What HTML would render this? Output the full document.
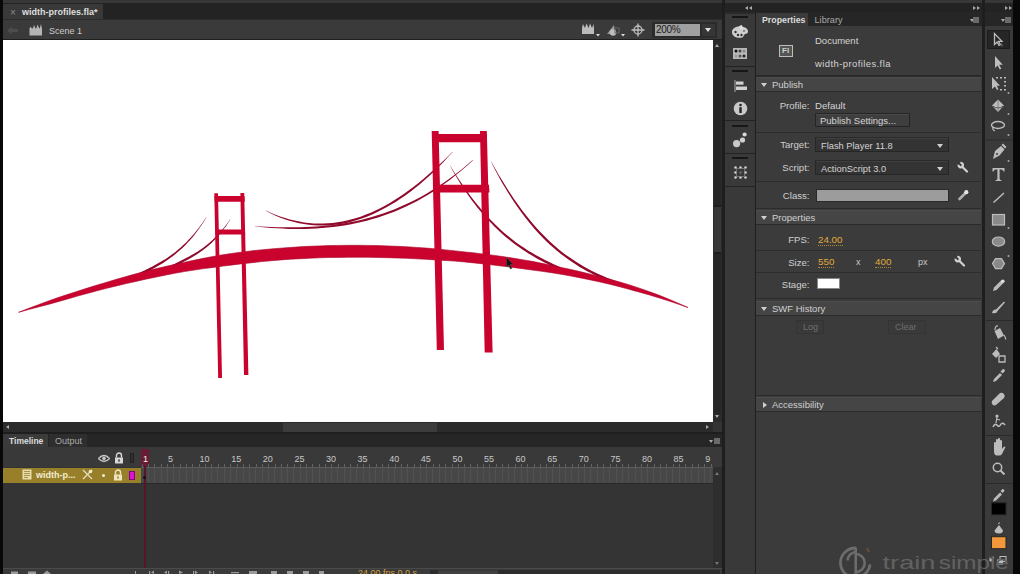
<!DOCTYPE html>
<html><head><meta charset="utf-8">
<style>
*{margin:0;padding:0;box-sizing:border-box}
html,body{width:1020px;height:574px;overflow:hidden;background:#252525;font-family:"Liberation Sans",sans-serif;color:#d6d6d6}
.a{position:absolute}
.t{position:absolute;font-size:9px;white-space:nowrap;line-height:1}
.hd{position:absolute;left:756px;width:225px;height:15px;background:#454545;border-top:1px solid #4d4d4d;border-bottom:1px solid #2a2a2a}
.hd span{position:absolute;left:16px;top:1.2px;font-size:9.5px;color:#d0d0d0}
.tri{position:absolute;left:5px;top:5px;width:0;height:0;border-left:3.5px solid transparent;border-right:3.5px solid transparent;border-top:4px solid #d0d0d0}
.sep{position:absolute;left:756px;width:225px;height:1px;background:#2c2c2c}
.lbl{position:absolute;font-size:9.6px;color:#cfcfcf;text-align:right;width:60px;line-height:1}
.dd{position:absolute;height:15px;background:#333;border:1px solid #262626;border-top-color:#2a2a2a;box-shadow:inset 0 1px 0 #404040}
.dd span{position:absolute;left:5px;top:2.5px;font-size:9.3px;color:#d4d4d4}
.dd i{position:absolute;right:5px;top:5.5px;width:0;height:0;border-left:3px solid transparent;border-right:3px solid transparent;border-top:4px solid #cfcfcf}
.org{color:#e0a93b;border-bottom:1px dotted #b08a30;font-size:9.8px}
.tic{position:absolute;width:1px;height:3px;background:#626262}
.fn{position:absolute;font-size:9px;color:#c8c8c8;top:455px;line-height:1}
</style></head><body>
<!-- left black strip -->
<div class="a" style="left:0;top:0;width:3px;height:574px;background:#080808"></div>

<!-- ===== top doc tab bar ===== -->
<div class="a" style="left:3px;top:0;width:720px;height:3px;background:#373737"></div>
<div class="a" style="left:3px;top:3px;width:720px;height:16px;background:#232323"></div>
<div class="a" style="left:3px;top:4px;width:100px;height:15px;background:#393939"></div>
<div class="t" style="left:10px;top:8px;color:#8a8a8a;font-size:10px">×</div>
<div class="t" style="left:22px;top:8px;font-weight:bold;color:#dedede">width-profiles.fla*</div>
<!-- scene bar -->
<div class="a" style="left:3px;top:19px;width:720px;height:21px;background:#3a3a3a;border-top:1px solid #2c2c2c;border-bottom:1px solid #202020"></div>
<!-- back arrow -->
<svg class="a" style="left:7px;top:26px" width="12" height="9" viewBox="0 0 12 9"><path d="M0 4.5 L5 0.5 V3 H11 V6 H5 V8.5Z" fill="#4c4c4c"/></svg>
<!-- clapper -->
<svg class="a" style="left:29px;top:23px" width="14" height="14" viewBox="0 0 14 14"><path d="M0.5 5.5 H13 V12.5 H0.5Z" fill="#b4b4b4"/><path d="M0.5 6 L1.5 3.5 L3.5 6.5 L5 2 L7 6.5 L8.5 1.5 L10.5 6 L12 1 L13 6Z" fill="#b4b4b4"/></svg>
<div class="t" style="left:49px;top:26.5px;color:#cdcdcd;font-size:9px">Scene 1</div>
<!-- right scene icons -->
<svg class="a" style="left:581px;top:22px" width="46" height="16" viewBox="0 0 46 16">
<path d="M1 6 H13 V12 H1Z" fill="#bcbcbc"/><path d="M1 6 L2 2 L4 6 L5.5 1.5 L7.5 6 L9 1.5 L11 6 L12.5 2 L13 6Z" fill="#bcbcbc"/>
<path d="M15 12 h4 l-2 2.5z" fill="#e0e0e0"/>
<path d="M26 12 L33 3 L34 12Z" fill="#9a9a9a"/><circle cx="32" cy="10.5" r="3.2" fill="#bdbdbd"/><rect x="34" y="6" width="4" height="5" fill="none" stroke="#666" stroke-width="1"/>
<path d="M40 12 h4 l-2 2.5z" fill="#e0e0e0"/>
</svg>
<svg class="a" style="left:631px;top:23px" width="14" height="14" viewBox="0 0 14 14"><circle cx="7" cy="7" r="4" fill="none" stroke="#bdbdbd" stroke-width="1.3"/><path d="M7 0.5V13.5M0.5 7H13.5" stroke="#bdbdbd" stroke-width="1.3"/></svg>
<div class="a" style="left:652px;top:22px;width:65px;height:16px;background:#2b2b2b"></div>
<div class="a" style="left:655px;top:24px;width:45px;height:12px;background:#a0a0a0"></div>
<div class="t" style="left:656px;top:25px;color:#1c1c1c;font-size:10px;letter-spacing:-0.3px">200%</div>
<div class="a" style="left:702px;top:24px;width:13px;height:12px;background:#363636"></div>
<div class="a" style="left:705px;top:28px;width:0;height:0;border-left:3.5px solid transparent;border-right:3.5px solid transparent;border-top:4px solid #e0e0e0"></div>

<!-- ===== stage ===== -->
<div class="a" style="left:3px;top:40px;width:710px;height:382px;background:#fff"></div>
<svg class="a" style="left:0;top:0" width="720" height="430" viewBox="0 0 720 430"><path d="M206.5 216.9 L204.7 219.6 L202.9 222.2 L201.1 224.7 L199.3 227.2 L197.5 229.5 L195.7 231.7 L193.9 233.9 L192.1 235.9 L190.3 237.9 L188.5 239.8 L186.8 241.7 L185.0 243.4 L183.2 245.1 L181.5 246.8 L179.7 248.3 L177.9 249.8 L176.2 251.3 L174.4 252.7 L172.6 254.0 L170.9 255.3 L169.1 256.5 L167.4 257.7 L165.6 258.9 L163.8 260.0 L162.1 261.1 L160.3 262.1 L158.5 263.1 L156.8 264.1 L155.0 265.1 L153.3 266.0 L151.5 266.9 L149.7 267.8 L148.0 268.7 L146.2 269.6 L144.5 270.4 L142.7 271.3 L140.9 272.2 L139.2 273.1 L137.4 273.9 L138.6 276.3 L140.3 275.4 L142.1 274.5 L143.9 273.6 L145.6 272.8 L147.4 271.9 L149.1 270.9 L150.9 270.0 L152.6 269.1 L154.4 268.1 L156.2 267.1 L157.9 266.1 L159.7 265.0 L161.4 264.0 L163.2 262.9 L164.9 261.7 L166.7 260.6 L168.5 259.3 L170.2 258.1 L172.0 256.8 L173.7 255.4 L175.5 254.0 L177.2 252.6 L179.0 251.1 L180.7 249.5 L182.5 247.9 L184.2 246.2 L186.0 244.4 L187.7 242.6 L189.5 240.7 L191.2 238.7 L193.0 236.7 L194.7 234.5 L196.4 232.3 L198.1 230.0 L199.9 227.6 L201.6 225.1 L203.3 222.5 L205.0 219.8 L206.7 217.1Z" fill="#900a2c"/><path d="M230.0 219.5 L228.5 221.7 L227.0 223.8 L225.5 225.8 L223.9 227.7 L222.4 229.5 L220.9 231.3 L219.4 233.0 L217.9 234.6 L216.4 236.1 L215.0 237.6 L213.5 239.1 L212.0 240.5 L210.5 241.8 L209.1 243.1 L207.6 244.3 L206.1 245.5 L204.7 246.6 L203.2 247.7 L201.8 248.8 L200.3 249.8 L198.8 250.7 L197.4 251.7 L195.9 252.6 L194.4 253.5 L193.0 254.3 L191.5 255.1 L190.0 255.9 L188.6 256.7 L187.1 257.5 L185.6 258.3 L184.2 259.0 L182.7 259.8 L181.2 260.5 L179.8 261.2 L178.3 262.0 L176.8 262.7 L175.4 263.5 L173.9 264.2 L172.4 265.0 L173.6 267.1 L175.0 266.3 L176.5 265.6 L177.9 264.9 L179.4 264.1 L180.9 263.4 L182.3 262.6 L183.8 261.8 L185.2 261.1 L186.7 260.3 L188.2 259.5 L189.6 258.7 L191.1 257.8 L192.6 257.0 L194.0 256.1 L195.5 255.2 L197.0 254.3 L198.4 253.3 L199.9 252.3 L201.3 251.3 L202.8 250.2 L204.3 249.1 L205.7 248.0 L207.2 246.8 L208.7 245.6 L210.1 244.3 L211.6 242.9 L213.0 241.6 L214.5 240.1 L216.0 238.6 L217.4 237.0 L218.8 235.4 L220.3 233.7 L221.7 231.9 L223.1 230.1 L224.5 228.1 L226.0 226.2 L227.4 224.1 L228.8 221.9 L230.2 219.7Z" fill="#900a2c"/><path d="M265.6 210.8 L270.4 213.2 L275.1 215.4 L279.9 217.4 L284.7 219.2 L289.5 220.8 L294.3 222.1 L299.1 223.2 L303.9 224.1 L308.7 224.8 L313.6 225.3 L318.4 225.5 L323.2 225.6 L328.1 225.4 L332.9 225.0 L337.7 224.5 L342.6 223.7 L347.4 222.7 L352.2 221.5 L357.1 220.1 L361.9 218.5 L366.7 216.7 L371.6 214.7 L376.4 212.5 L381.2 210.1 L386.0 207.5 L390.8 204.8 L395.6 201.9 L400.4 198.7 L405.3 195.4 L410.1 191.9 L414.8 188.2 L419.6 184.4 L424.4 180.3 L429.2 176.1 L434.0 171.6 L438.6 167.0 L443.3 162.2 L448.0 157.1 L452.7 152.0 L452.5 151.8 L447.6 156.7 L442.7 161.5 L437.8 166.1 L432.9 170.5 L428.1 174.8 L423.3 179.0 L418.5 183.0 L413.7 186.7 L408.9 190.3 L404.1 193.8 L399.3 197.0 L394.5 200.1 L389.8 203.0 L385.0 205.7 L380.2 208.2 L375.5 210.5 L370.7 212.7 L365.9 214.6 L361.2 216.4 L356.4 218.0 L351.7 219.3 L346.9 220.5 L342.2 221.5 L337.4 222.3 L332.7 222.9 L327.9 223.3 L323.2 223.5 L318.4 223.5 L313.7 223.4 L308.9 223.0 L304.2 222.4 L299.4 221.6 L294.6 220.6 L289.9 219.4 L285.1 218.1 L280.2 216.5 L275.4 214.7 L270.6 212.7 L265.8 210.5Z" fill="#900a2c"/><path d="M254.9 226.5 L260.5 227.0 L266.0 227.5 L271.6 227.9 L277.2 228.3 L282.8 228.6 L288.4 228.9 L294.0 229.0 L299.6 229.0 L305.2 228.9 L310.8 228.7 L316.4 228.5 L322.0 228.1 L327.6 227.6 L333.2 227.0 L338.8 226.3 L344.4 225.4 L350.0 224.4 L355.7 223.3 L361.3 222.1 L366.9 220.7 L372.5 219.1 L378.1 217.4 L383.7 215.6 L389.3 213.6 L394.9 211.4 L400.5 209.0 L406.1 206.5 L411.7 203.8 L417.3 200.9 L422.9 197.8 L428.5 194.5 L434.1 191.0 L439.6 187.3 L445.2 183.3 L450.7 179.2 L456.2 174.8 L461.8 170.2 L467.3 165.4 L472.8 160.4 L472.6 160.1 L466.9 165.0 L461.3 169.7 L455.7 174.1 L450.0 178.3 L444.4 182.2 L438.8 186.0 L433.1 189.5 L427.6 192.9 L422.0 196.2 L416.4 199.2 L410.8 202.0 L405.3 204.6 L399.7 207.1 L394.1 209.4 L388.5 211.5 L383.0 213.5 L377.4 215.3 L371.9 217.0 L366.3 218.5 L360.8 219.9 L355.2 221.2 L349.6 222.3 L344.1 223.3 L338.5 224.1 L333.0 224.9 L327.4 225.5 L321.8 226.1 L316.3 226.5 L310.7 226.8 L305.1 227.1 L299.6 227.2 L294.0 227.3 L288.4 227.3 L282.8 227.3 L277.3 227.2 L271.7 227.0 L266.1 226.8 L260.5 226.5 L254.9 226.2Z" fill="#900a2c"/><path d="M449.9 165.6 L452.6 170.4 L455.4 175.2 L458.1 179.7 L460.8 184.2 L463.6 188.5 L466.3 192.6 L469.1 196.6 L471.9 200.4 L474.7 204.1 L477.5 207.7 L480.3 211.1 L483.2 214.4 L486.0 217.6 L488.8 220.7 L491.6 223.6 L494.4 226.5 L497.3 229.2 L500.1 231.9 L502.9 234.4 L505.7 236.9 L508.6 239.2 L511.4 241.5 L514.2 243.7 L517.0 245.8 L519.9 247.8 L522.7 249.7 L525.5 251.6 L528.4 253.4 L531.2 255.1 L534.0 256.8 L536.9 258.4 L539.7 260.0 L542.5 261.5 L545.3 262.9 L548.2 264.3 L551.0 265.7 L553.8 267.0 L556.7 268.3 L559.5 269.6 L560.5 267.3 L557.7 266.0 L554.9 264.8 L552.1 263.4 L549.3 262.1 L546.5 260.7 L543.6 259.3 L540.8 257.8 L538.0 256.3 L535.2 254.7 L532.4 253.1 L529.6 251.4 L526.8 249.7 L524.0 247.8 L521.2 245.9 L518.3 244.0 L515.5 241.9 L512.7 239.8 L509.9 237.6 L507.1 235.3 L504.3 232.9 L501.5 230.4 L498.6 227.8 L495.8 225.1 L493.0 222.3 L490.2 219.4 L487.4 216.4 L484.5 213.2 L481.7 210.0 L478.9 206.6 L476.0 203.1 L473.2 199.5 L470.3 195.7 L467.5 191.8 L464.6 187.8 L461.7 183.6 L458.8 179.3 L455.9 174.8 L453.0 170.2 L450.1 165.4Z" fill="#900a2c"/><path d="M490.9 161.3 L494.4 168.5 L498.0 175.3 L501.6 181.9 L505.3 188.1 L508.9 194.1 L512.6 199.8 L516.3 205.3 L520.0 210.5 L523.7 215.5 L527.4 220.3 L531.1 224.8 L534.8 229.2 L538.5 233.3 L542.3 237.2 L546.0 240.9 L549.7 244.4 L553.5 247.8 L557.2 250.9 L560.9 254.0 L564.7 256.8 L568.4 259.6 L572.1 262.1 L575.9 264.6 L579.6 266.9 L583.3 269.1 L587.1 271.2 L590.8 273.1 L594.5 275.0 L598.3 276.8 L602.0 278.5 L605.7 280.1 L609.5 281.7 L613.2 283.1 L617.0 284.6 L620.7 286.0 L624.4 287.3 L628.1 288.6 L631.9 289.9 L635.6 291.2 L636.4 288.7 L632.7 287.5 L629.0 286.2 L625.3 284.9 L621.6 283.5 L617.9 282.1 L614.2 280.7 L610.5 279.3 L606.8 277.7 L603.1 276.1 L599.4 274.4 L595.7 272.7 L592.0 270.9 L588.3 268.9 L584.6 266.9 L580.9 264.8 L577.2 262.5 L573.5 260.1 L569.8 257.6 L566.0 255.0 L562.3 252.2 L558.6 249.2 L554.9 246.1 L551.2 242.8 L547.5 239.3 L543.8 235.6 L540.1 231.8 L536.4 227.7 L532.7 223.5 L529.0 219.0 L525.2 214.3 L521.5 209.4 L517.8 204.3 L514.0 198.9 L510.2 193.3 L506.5 187.4 L502.7 181.2 L498.8 174.9 L495.0 168.2 L491.1 161.2Z" fill="#900a2c"/><path d="M18.6 312.3 L28.5 309.6 L38.3 307.0 L48.2 304.4 L58.0 301.7 L67.7 298.9 L77.5 296.1 L87.2 293.4 L97.0 290.8 L106.7 288.3 L116.4 285.9 L126.2 283.6 L135.9 281.4 L145.6 279.2 L155.3 277.2 L165.0 275.2 L174.7 273.3 L184.4 271.6 L194.1 270.1 L203.8 268.6 L213.5 267.4 L223.1 266.1 L232.8 264.9 L242.4 263.7 L252.1 262.7 L261.7 261.6 L271.4 260.7 L281.0 259.9 L290.6 259.2 L300.3 258.7 L309.9 258.2 L319.6 257.8 L329.2 257.5 L338.8 257.4 L348.5 257.3 L358.1 257.3 L367.8 257.3 L377.4 257.5 L387.1 257.7 L396.7 258.0 L406.4 258.3 L416.0 258.8 L425.7 259.3 L435.4 259.9 L445.0 260.5 L454.7 261.1 L464.4 261.9 L474.0 262.9 L483.7 263.9 L493.4 265.1 L503.0 266.2 L512.7 267.4 L522.4 268.7 L532.1 270.0 L541.8 271.3 L551.5 272.7 L561.2 274.3 L570.9 276.0 L580.6 277.9 L590.4 279.9 L600.1 282.0 L609.8 284.3 L619.5 286.7 L629.2 289.3 L638.9 292.0 L648.7 294.7 L658.5 297.7 L668.3 300.8 L678.1 304.1 L688.0 307.5 L688.0 307.5 L678.4 303.3 L668.9 299.2 L659.3 295.3 L649.7 291.8 L640.0 288.4 L630.4 285.2 L620.7 282.3 L611.0 279.5 L601.3 276.9 L591.6 274.4 L581.9 272.1 L572.2 269.8 L562.5 267.7 L552.8 265.6 L543.1 263.6 L533.5 261.6 L523.7 259.9 L514.0 258.3 L504.3 256.8 L494.6 255.4 L484.8 254.2 L475.1 253.0 L465.4 252.0 L455.6 250.9 L445.9 249.9 L436.2 248.9 L426.4 248.1 L416.7 247.4 L406.9 246.8 L397.2 246.3 L387.4 245.9 L377.7 245.6 L367.9 245.4 L358.2 245.3 L348.4 245.3 L338.7 245.4 L328.9 245.6 L319.1 245.9 L309.4 246.3 L299.6 246.8 L289.8 247.5 L280.1 248.2 L270.3 249.0 L260.5 249.9 L250.8 250.9 L241.0 252.2 L231.3 253.5 L221.5 255.0 L211.8 256.7 L202.1 258.6 L192.4 260.6 L182.7 262.7 L173.0 264.8 L163.2 267.0 L153.5 269.3 L143.8 271.8 L134.1 274.3 L124.5 277.0 L114.8 279.8 L105.1 282.7 L95.5 285.6 L85.8 288.6 L76.1 291.7 L66.5 294.8 L56.8 298.0 L47.2 301.4 L37.7 305.0 L28.1 308.6 L18.6 312.3Z" fill="#c9032d" stroke="#a8032a" stroke-width="0.6"/><path d="M214.3 193.3 L218.0 193.3 L222.0 378.0 L218.2 378.0Z" fill="#c9032d"/><path d="M240.4 193.1 L244.2 193.1 L248.4 375.0 L244.0 375.0Z" fill="#c9032d"/><path d="M214.5 196.0 L244.5 196.0 L244.8 201.7 L214.8 201.7Z" fill="#c9032d"/><path d="M215.5 229.4 L245.0 229.4 L245.2 234.6 L215.5 234.6Z" fill="#c9032d"/><path d="M431.7 131.0 L438.6 131.0 L444.0 350.0 L436.8 350.0Z" fill="#c9032d"/><path d="M480.0 131.0 L486.8 131.0 L492.6 352.4 L484.7 352.4Z" fill="#c9032d"/><path d="M432.0 134.0 L487.0 134.0 L487.0 142.3 L432.0 142.3Z" fill="#c9032d"/><path d="M433.5 184.7 L489.0 184.7 L489.5 192.5 L433.5 192.5Z" fill="#c9032d"/></svg>
<!-- cursor -->
<svg class="a" style="left:506px;top:257px" width="8" height="13" viewBox="0 0 8 13"><path d="M0.5 0.5 L0.5 10 L2.5 8 L4.5 12 L6 11.3 L4 7.5 L7 7.5Z" fill="#111" stroke="#555" stroke-width="0.5"/></svg>

<!-- v scrollbar -->
<div class="a" style="left:713px;top:40px;width:9px;height:382px;background:#2b2b2b"></div>
<div class="a" style="left:714px;top:48px;width:7px;height:366px;background:#262626"></div>
<div class="a" style="left:714px;top:205px;width:7px;height:49px;background:#383838;border-top:2px solid #1e1e1e;border-bottom:2px solid #1e1e1e"></div>
<div class="a" style="left:715px;top:44px;width:0;height:0;border-left:2.5px solid transparent;border-right:2.5px solid transparent;border-bottom:3px solid #aaa"></div>
<div class="a" style="left:715px;top:415px;width:0;height:0;border-left:2.5px solid transparent;border-right:2.5px solid transparent;border-top:3px solid #aaa"></div>
<!-- h scrollbar -->
<div class="a" style="left:3px;top:422px;width:719px;height:10px;background:#2b2b2b"></div>

<div class="a" style="left:283px;top:423px;width:154px;height:9px;background:#3c3c3c"></div>
<div class="a" style="left:6px;top:425px;width:0;height:0;border-top:2.5px solid transparent;border-bottom:2.5px solid transparent;border-right:3px solid #aaa"></div>
<div class="a" style="left:706px;top:425px;width:0;height:0;border-top:2.5px solid transparent;border-bottom:2.5px solid transparent;border-left:3px solid #aaa"></div>
<div class="a" style="left:713px;top:422px;width:9px;height:10px;background:#333"></div>

<!-- ===== timeline panel ===== -->
<div class="a" style="left:3px;top:432px;width:720px;height:2px;background:#1e1e1e"></div>
<div class="a" style="left:3px;top:434px;width:720px;height:13px;background:#262626"></div>
<div class="a" style="left:3px;top:434px;width:45px;height:13px;background:#3b3b3b"></div>
<div class="a" style="left:49px;top:434px;width:38px;height:13px;background:#2e2e2e"></div>
<div class="t" style="left:9px;top:437px;font-weight:bold;color:#dcdcdc;font-size:8.5px">Timeline</div>
<div class="t" style="left:55px;top:437px;color:#aaaaaa">Output</div>
<div class="a" style="left:709px;top:440px;width:0;height:0;border-left:2px solid transparent;border-right:2px solid transparent;border-top:3px solid #aaa"></div>
<div class="a" style="left:714px;top:438px;width:6px;height:6px;background:#6a6a6a"></div>
<!-- header row -->
<div class="a" style="left:3px;top:447px;width:720px;height:127px;background:#343434"></div>
<div class="a" style="left:3px;top:447px;width:720px;height:20px;background:#393939"></div>
<!-- eye -->
<svg class="a" style="left:98px;top:454px" width="12" height="9" viewBox="0 0 12 9"><path d="M0.5 4.5 Q6 -1.5 11.5 4.5 Q6 10.5 0.5 4.5Z" fill="none" stroke="#c8c8c8" stroke-width="1.3"/><circle cx="6" cy="4.5" r="1.8" fill="#c8c8c8"/></svg>
<!-- lock -->
<svg class="a" style="left:114px;top:452px" width="10" height="12" viewBox="0 0 10 12"><path d="M2.5 5.5 V3.5 A2.5 2.5 0 0 1 7.5 3.5 V5.5" fill="none" stroke="#d8d8d8" stroke-width="1.4"/><rect x="1" y="5.5" width="8" height="6" fill="#d8d8d8"/><rect x="4.3" y="7.3" width="1.4" height="2.4" fill="#393939"/></svg>
<div class="a" style="left:130px;top:453px;width:4px;height:10px;border:1px solid #222;background:#2f2f2f"></div>
<!-- frames header -->
<div class="a" style="left:141px;top:449px;width:8px;height:17px;background:#6b1a33;border-radius:1px"></div>
<div class="t" style="left:143px;top:455px;color:#f0f0f0;font-size:9px">1</div>
<div class="fn" style="left:168.0px">5</div><div class="fn" style="left:199.6px">10</div><div class="fn" style="left:231.2px">15</div><div class="fn" style="left:262.8px">20</div><div class="fn" style="left:294.4px">25</div><div class="fn" style="left:326.0px">30</div><div class="fn" style="left:357.6px">35</div><div class="fn" style="left:389.2px">40</div><div class="fn" style="left:420.8px">45</div><div class="fn" style="left:452.4px">50</div><div class="fn" style="left:484.0px">55</div><div class="fn" style="left:515.6px">60</div><div class="fn" style="left:547.2px">65</div><div class="fn" style="left:578.8px">70</div><div class="fn" style="left:610.4px">75</div><div class="fn" style="left:642.0px">80</div><div class="fn" style="left:673.6px">85</div><div class="fn" style="left:705.2px">9</div><div class="tic" style="left:141.8px;top:464px"></div><div class="tic" style="left:148.1px;top:464px"></div><div class="tic" style="left:154.4px;top:464px"></div><div class="tic" style="left:160.8px;top:464px"></div><div class="tic" style="left:167.1px;top:464px"></div><div class="tic" style="left:173.4px;top:464px"></div><div class="tic" style="left:179.7px;top:464px"></div><div class="tic" style="left:186.0px;top:464px"></div><div class="tic" style="left:192.4px;top:464px"></div><div class="tic" style="left:198.7px;top:464px"></div><div class="tic" style="left:205.0px;top:464px"></div><div class="tic" style="left:211.3px;top:464px"></div><div class="tic" style="left:217.6px;top:464px"></div><div class="tic" style="left:224.0px;top:464px"></div><div class="tic" style="left:230.3px;top:464px"></div><div class="tic" style="left:236.6px;top:464px"></div><div class="tic" style="left:242.9px;top:464px"></div><div class="tic" style="left:249.2px;top:464px"></div><div class="tic" style="left:255.6px;top:464px"></div><div class="tic" style="left:261.9px;top:464px"></div><div class="tic" style="left:268.2px;top:464px"></div><div class="tic" style="left:274.5px;top:464px"></div><div class="tic" style="left:280.8px;top:464px"></div><div class="tic" style="left:287.2px;top:464px"></div><div class="tic" style="left:293.5px;top:464px"></div><div class="tic" style="left:299.8px;top:464px"></div><div class="tic" style="left:306.1px;top:464px"></div><div class="tic" style="left:312.4px;top:464px"></div><div class="tic" style="left:318.8px;top:464px"></div><div class="tic" style="left:325.1px;top:464px"></div><div class="tic" style="left:331.4px;top:464px"></div><div class="tic" style="left:337.7px;top:464px"></div><div class="tic" style="left:344.0px;top:464px"></div><div class="tic" style="left:350.4px;top:464px"></div><div class="tic" style="left:356.7px;top:464px"></div><div class="tic" style="left:363.0px;top:464px"></div><div class="tic" style="left:369.3px;top:464px"></div><div class="tic" style="left:375.6px;top:464px"></div><div class="tic" style="left:382.0px;top:464px"></div><div class="tic" style="left:388.3px;top:464px"></div><div class="tic" style="left:394.6px;top:464px"></div><div class="tic" style="left:400.9px;top:464px"></div><div class="tic" style="left:407.2px;top:464px"></div><div class="tic" style="left:413.6px;top:464px"></div><div class="tic" style="left:419.9px;top:464px"></div><div class="tic" style="left:426.2px;top:464px"></div><div class="tic" style="left:432.5px;top:464px"></div><div class="tic" style="left:438.8px;top:464px"></div><div class="tic" style="left:445.2px;top:464px"></div><div class="tic" style="left:451.5px;top:464px"></div><div class="tic" style="left:457.8px;top:464px"></div><div class="tic" style="left:464.1px;top:464px"></div><div class="tic" style="left:470.4px;top:464px"></div><div class="tic" style="left:476.8px;top:464px"></div><div class="tic" style="left:483.1px;top:464px"></div><div class="tic" style="left:489.4px;top:464px"></div><div class="tic" style="left:495.7px;top:464px"></div><div class="tic" style="left:502.0px;top:464px"></div><div class="tic" style="left:508.4px;top:464px"></div><div class="tic" style="left:514.7px;top:464px"></div><div class="tic" style="left:521.0px;top:464px"></div><div class="tic" style="left:527.3px;top:464px"></div><div class="tic" style="left:533.6px;top:464px"></div><div class="tic" style="left:540.0px;top:464px"></div><div class="tic" style="left:546.3px;top:464px"></div><div class="tic" style="left:552.6px;top:464px"></div><div class="tic" style="left:558.9px;top:464px"></div><div class="tic" style="left:565.2px;top:464px"></div><div class="tic" style="left:571.6px;top:464px"></div><div class="tic" style="left:577.9px;top:464px"></div><div class="tic" style="left:584.2px;top:464px"></div><div class="tic" style="left:590.5px;top:464px"></div><div class="tic" style="left:596.8px;top:464px"></div><div class="tic" style="left:603.2px;top:464px"></div><div class="tic" style="left:609.5px;top:464px"></div><div class="tic" style="left:615.8px;top:464px"></div><div class="tic" style="left:622.1px;top:464px"></div><div class="tic" style="left:628.4px;top:464px"></div><div class="tic" style="left:634.8px;top:464px"></div><div class="tic" style="left:641.1px;top:464px"></div><div class="tic" style="left:647.4px;top:464px"></div><div class="tic" style="left:653.7px;top:464px"></div><div class="tic" style="left:660.0px;top:464px"></div><div class="tic" style="left:666.4px;top:464px"></div><div class="tic" style="left:672.7px;top:464px"></div><div class="tic" style="left:679.0px;top:464px"></div><div class="tic" style="left:685.3px;top:464px"></div><div class="tic" style="left:691.6px;top:464px"></div><div class="tic" style="left:698.0px;top:464px"></div><div class="tic" style="left:704.3px;top:464px"></div><div class="tic" style="left:710.6px;top:464px"></div>
<!-- layer row -->
<div class="a" style="left:3px;top:468px;width:138px;height:15px;background:#98802a"></div>
<svg class="a" style="left:22px;top:469px" width="10" height="11" viewBox="0 0 10 11"><rect x="0.5" y="0.5" width="9" height="10" fill="#e8dcae"/><path d="M2 2.5h6M2 4.5h6M2 6.5h6M2 8.5h4" stroke="#98802a" stroke-width="0.8"/></svg>
<div class="t" style="left:36px;top:471px;font-weight:bold;color:#f2ecd0">width-p...</div>
<svg class="a" style="left:82px;top:469px" width="11" height="11" viewBox="0 0 11 11"><path d="M1 1 L10 10 M10 1 L1 10" stroke="#e8e0c0" stroke-width="1.2"/><circle cx="8.5" cy="2.5" r="1.8" fill="#f0e8c8"/></svg>
<div class="a" style="left:102px;top:474px;width:3px;height:3px;background:#f5efd0;border-radius:50%"></div>
<svg class="a" style="left:113px;top:469px" width="10" height="12" viewBox="0 0 10 12"><path d="M2.5 5.5 V3.5 A2.5 2.5 0 0 1 7.5 3.5 V5.5" fill="none" stroke="#efe6c0" stroke-width="1.4"/><rect x="1" y="5.5" width="8" height="6" fill="#efe6c0"/><rect x="4.3" y="7.3" width="1.4" height="2.4" fill="#98802a"/></svg>
<div class="a" style="left:129px;top:471px;width:6px;height:9px;background:#e010d8;border:1px solid #7a0a70"></div>
<!-- frames row -->
<div class="a" style="left:141px;top:467px;width:572px;height:16px;background:#474747"></div>
<div class="a" style="left:141px;top:467px;width:572px;height:1px;background:#5c5c5c"></div><div class="a" style="left:147.8px;top:468px;width:1px;height:15px;background:#515151"></div><div class="a" style="left:154.1px;top:468px;width:1px;height:15px;background:#515151"></div><div class="a" style="left:160.5px;top:468px;width:1px;height:15px;background:#515151"></div><div class="a" style="left:166.8px;top:468px;width:1px;height:15px;background:#515151"></div><div class="a" style="left:173.1px;top:468px;width:1px;height:15px;background:#515151"></div><div class="a" style="left:179.4px;top:468px;width:1px;height:15px;background:#515151"></div><div class="a" style="left:185.7px;top:468px;width:1px;height:15px;background:#515151"></div><div class="a" style="left:192.1px;top:468px;width:1px;height:15px;background:#515151"></div><div class="a" style="left:198.4px;top:468px;width:1px;height:15px;background:#515151"></div><div class="a" style="left:204.7px;top:468px;width:1px;height:15px;background:#515151"></div><div class="a" style="left:211.0px;top:468px;width:1px;height:15px;background:#515151"></div><div class="a" style="left:217.3px;top:468px;width:1px;height:15px;background:#515151"></div><div class="a" style="left:223.7px;top:468px;width:1px;height:15px;background:#515151"></div><div class="a" style="left:230.0px;top:468px;width:1px;height:15px;background:#515151"></div><div class="a" style="left:236.3px;top:468px;width:1px;height:15px;background:#515151"></div><div class="a" style="left:242.6px;top:468px;width:1px;height:15px;background:#515151"></div><div class="a" style="left:248.9px;top:468px;width:1px;height:15px;background:#515151"></div><div class="a" style="left:255.3px;top:468px;width:1px;height:15px;background:#515151"></div><div class="a" style="left:261.6px;top:468px;width:1px;height:15px;background:#515151"></div><div class="a" style="left:267.9px;top:468px;width:1px;height:15px;background:#515151"></div><div class="a" style="left:274.2px;top:468px;width:1px;height:15px;background:#515151"></div><div class="a" style="left:280.5px;top:468px;width:1px;height:15px;background:#515151"></div><div class="a" style="left:286.9px;top:468px;width:1px;height:15px;background:#515151"></div><div class="a" style="left:293.2px;top:468px;width:1px;height:15px;background:#515151"></div><div class="a" style="left:299.5px;top:468px;width:1px;height:15px;background:#515151"></div><div class="a" style="left:305.8px;top:468px;width:1px;height:15px;background:#515151"></div><div class="a" style="left:312.1px;top:468px;width:1px;height:15px;background:#515151"></div><div class="a" style="left:318.5px;top:468px;width:1px;height:15px;background:#515151"></div><div class="a" style="left:324.8px;top:468px;width:1px;height:15px;background:#515151"></div><div class="a" style="left:331.1px;top:468px;width:1px;height:15px;background:#515151"></div><div class="a" style="left:337.4px;top:468px;width:1px;height:15px;background:#515151"></div><div class="a" style="left:343.7px;top:468px;width:1px;height:15px;background:#515151"></div><div class="a" style="left:350.1px;top:468px;width:1px;height:15px;background:#515151"></div><div class="a" style="left:356.4px;top:468px;width:1px;height:15px;background:#515151"></div><div class="a" style="left:362.7px;top:468px;width:1px;height:15px;background:#515151"></div><div class="a" style="left:369.0px;top:468px;width:1px;height:15px;background:#515151"></div><div class="a" style="left:375.3px;top:468px;width:1px;height:15px;background:#515151"></div><div class="a" style="left:381.7px;top:468px;width:1px;height:15px;background:#515151"></div><div class="a" style="left:388.0px;top:468px;width:1px;height:15px;background:#515151"></div><div class="a" style="left:394.3px;top:468px;width:1px;height:15px;background:#515151"></div><div class="a" style="left:400.6px;top:468px;width:1px;height:15px;background:#515151"></div><div class="a" style="left:406.9px;top:468px;width:1px;height:15px;background:#515151"></div><div class="a" style="left:413.3px;top:468px;width:1px;height:15px;background:#515151"></div><div class="a" style="left:419.6px;top:468px;width:1px;height:15px;background:#515151"></div><div class="a" style="left:425.9px;top:468px;width:1px;height:15px;background:#515151"></div><div class="a" style="left:432.2px;top:468px;width:1px;height:15px;background:#515151"></div><div class="a" style="left:438.5px;top:468px;width:1px;height:15px;background:#515151"></div><div class="a" style="left:444.9px;top:468px;width:1px;height:15px;background:#515151"></div><div class="a" style="left:451.2px;top:468px;width:1px;height:15px;background:#515151"></div><div class="a" style="left:457.5px;top:468px;width:1px;height:15px;background:#515151"></div><div class="a" style="left:463.8px;top:468px;width:1px;height:15px;background:#515151"></div><div class="a" style="left:470.1px;top:468px;width:1px;height:15px;background:#515151"></div><div class="a" style="left:476.5px;top:468px;width:1px;height:15px;background:#515151"></div><div class="a" style="left:482.8px;top:468px;width:1px;height:15px;background:#515151"></div><div class="a" style="left:489.1px;top:468px;width:1px;height:15px;background:#515151"></div><div class="a" style="left:495.4px;top:468px;width:1px;height:15px;background:#515151"></div><div class="a" style="left:501.7px;top:468px;width:1px;height:15px;background:#515151"></div><div class="a" style="left:508.1px;top:468px;width:1px;height:15px;background:#515151"></div><div class="a" style="left:514.4px;top:468px;width:1px;height:15px;background:#515151"></div><div class="a" style="left:520.7px;top:468px;width:1px;height:15px;background:#515151"></div><div class="a" style="left:527.0px;top:468px;width:1px;height:15px;background:#515151"></div><div class="a" style="left:533.3px;top:468px;width:1px;height:15px;background:#515151"></div><div class="a" style="left:539.7px;top:468px;width:1px;height:15px;background:#515151"></div><div class="a" style="left:546.0px;top:468px;width:1px;height:15px;background:#515151"></div><div class="a" style="left:552.3px;top:468px;width:1px;height:15px;background:#515151"></div><div class="a" style="left:558.6px;top:468px;width:1px;height:15px;background:#515151"></div><div class="a" style="left:564.9px;top:468px;width:1px;height:15px;background:#515151"></div><div class="a" style="left:571.3px;top:468px;width:1px;height:15px;background:#515151"></div><div class="a" style="left:577.6px;top:468px;width:1px;height:15px;background:#515151"></div><div class="a" style="left:583.9px;top:468px;width:1px;height:15px;background:#515151"></div><div class="a" style="left:590.2px;top:468px;width:1px;height:15px;background:#515151"></div><div class="a" style="left:596.5px;top:468px;width:1px;height:15px;background:#515151"></div><div class="a" style="left:602.9px;top:468px;width:1px;height:15px;background:#515151"></div><div class="a" style="left:609.2px;top:468px;width:1px;height:15px;background:#515151"></div><div class="a" style="left:615.5px;top:468px;width:1px;height:15px;background:#515151"></div><div class="a" style="left:621.8px;top:468px;width:1px;height:15px;background:#515151"></div><div class="a" style="left:628.1px;top:468px;width:1px;height:15px;background:#515151"></div><div class="a" style="left:634.5px;top:468px;width:1px;height:15px;background:#515151"></div><div class="a" style="left:640.8px;top:468px;width:1px;height:15px;background:#515151"></div><div class="a" style="left:647.1px;top:468px;width:1px;height:15px;background:#515151"></div><div class="a" style="left:653.4px;top:468px;width:1px;height:15px;background:#515151"></div><div class="a" style="left:659.7px;top:468px;width:1px;height:15px;background:#515151"></div><div class="a" style="left:666.1px;top:468px;width:1px;height:15px;background:#515151"></div><div class="a" style="left:672.4px;top:468px;width:1px;height:15px;background:#515151"></div><div class="a" style="left:678.7px;top:468px;width:1px;height:15px;background:#515151"></div><div class="a" style="left:685.0px;top:468px;width:1px;height:15px;background:#515151"></div><div class="a" style="left:691.3px;top:468px;width:1px;height:15px;background:#515151"></div><div class="a" style="left:697.7px;top:468px;width:1px;height:15px;background:#515151"></div><div class="a" style="left:704.0px;top:468px;width:1px;height:15px;background:#515151"></div><div class="a" style="left:710.3px;top:468px;width:1px;height:15px;background:#515151"></div><div class="a" style="left:141px;top:483px;width:572px;height:1px;background:#2a2a2a"></div>
<!-- playhead line -->
<div class="a" style="left:144px;top:466px;width:2px;height:102px;background:#561626"></div>
<div class="a" style="left:143px;top:476px;width:3px;height:3px;background:#111;border-radius:50%"></div>
<!-- timeline v scroll -->
<div class="a" style="left:713px;top:467px;width:9px;height:101px;background:#2e2e2e"></div>
<div class="a" style="left:715px;top:472px;width:0;height:0;border-left:2.5px solid transparent;border-right:2.5px solid transparent;border-bottom:3px solid #777"></div>
<div class="a" style="left:715px;top:562px;width:0;height:0;border-left:2.5px solid transparent;border-right:2.5px solid transparent;border-top:3px solid #777"></div>
<!-- bottom toolbar -->
<div class="a" style="left:3px;top:568px;width:720px;height:6px;background:#3a3a3a;border-top:1px solid #4a4a4a"></div>

<svg class="a" style="left:3px;top:569px" width="720" height="5" viewBox="0 0 720 5">
<g fill="#9a9a9a">
<rect x="8" y="2.5" width="7" height="3"/><rect x="25" y="2.5" width="8" height="3"/><path d="M40 5 L44 1.5 L48 5Z"/>
<rect x="132" y="2" width="1" height="3"/>
<rect x="146" y="2" width="1.2" height="3"/><path d="M148 3.5 L151 1.5 V5Z"/>
<path d="M161 3.5 L164 1.5 V5Z"/><rect x="165" y="2" width="1.2" height="3"/>
<path d="M176 1.5 L180 3.5 L176 5Z"/>
<rect x="190" y="2" width="1.2" height="3"/><path d="M192 1.5 L195 3.5 L192 5Z"/>
<path d="M206 1.5 L209 3.5 L206 5Z"/><rect x="210" y="2" width="1.2" height="3"/>
<rect x="228" y="3" width="8" height="1.2"/><rect x="246" y="2" width="8" height="3"/>
<rect x="268" y="2" width="6" height="3"/><rect x="284" y="2" width="6" height="3"/><rect x="300" y="2" width="6" height="3"/><rect x="316" y="2" width="5" height="3"/>
</g>
<text x="355" y="7" font-size="9" fill="#d0a040" font-family="Liberation Sans">24.00 fps  0.0 s</text>
<rect x="427" y="1" width="290" height="4" fill="#2c2c2c"/><rect x="435" y="1.5" width="60" height="3.5" fill="#404040"/>
</svg>


<!-- ===== icon column ===== -->
<div class="a" style="left:722px;top:0;width:3px;height:574px;background:#1e1e1e"></div>
<div class="a" style="left:725px;top:0;width:30px;height:3px;background:#373737"></div>
<div class="a" style="left:725px;top:3px;width:30px;height:11px;background:#232323"></div>
<div class="a" style="left:745px;top:6px;width:0;height:0;border-top:2.5px solid transparent;border-bottom:2.5px solid transparent;border-right:3px solid #aaa"></div>
<div class="a" style="left:749px;top:6px;width:0;height:0;border-top:2.5px solid transparent;border-bottom:2.5px solid transparent;border-right:3px solid #aaa"></div>
<div class="a" style="left:725px;top:14px;width:30px;height:560px;background:#393939"></div>

<div class="a" style="left:725px;top:12px;width:30px;height:2px;background:#2a2a2a"></div>
<div class="a" style="left:732px;top:16px;width:16px;height:2px;background:#161616"></div>
<svg class="a" style="left:731px;top:25px" width="18" height="14" viewBox="0 0 18 14"><path d="M9 1.5 C14.5 1.5 17 4 17 6.5 C17 9 15 8.2 13.5 9.5 C12 11 13 12.8 9 12.8 C4 12.8 1 10.5 1 7 C1 3.5 4.5 1.5 9 1.5Z" fill="#cfcfcf"/><circle cx="4.5" cy="7" r="1.2" fill="#333"/><circle cx="7" cy="10" r="1.2" fill="#333"/><circle cx="10.5" cy="10" r="1.2" fill="#333"/><circle cx="13" cy="6" r="1.1" fill="#777"/><path d="M8 1 L11 0 L12 4 L9 4Z" fill="#e0e0e0"/></svg>
<svg class="a" style="left:733px;top:48px" width="14" height="11" viewBox="0 0 14 11"><rect x="0" y="0" width="14" height="11" fill="#b8b8b8"/><circle cx="3" cy="3" r="1.5" fill="#111"/><circle cx="7" cy="3" r="1.5" fill="#444"/><circle cx="11" cy="3" r="1.5" fill="#888"/><circle cx="3" cy="8" r="1.5" fill="#999"/><circle cx="7" cy="8" r="1.5" fill="#555"/><circle cx="11" cy="8" r="1.5" fill="#222"/></svg>
<div class="a" style="left:725px;top:66px;width:30px;height:1px;background:#222"></div>
<div class="a" style="left:732px;top:70px;width:16px;height:2px;background:#161616"></div>
<svg class="a" style="left:734px;top:80px" width="14" height="12" viewBox="0 0 14 12"><rect x="0.5" y="0" width="1" height="12" fill="#aaa"/><rect x="2" y="1.5" width="7.5" height="3.2" fill="#d0d0d0"/><rect x="2" y="6.5" width="11" height="3.5" fill="#d0d0d0"/></svg>
<svg class="a" style="left:733px;top:101px" width="15" height="15" viewBox="0 0 15 15"><circle cx="7.5" cy="7.5" r="6.8" fill="#c9c9c9"/><circle cx="7.5" cy="4" r="1.3" fill="#222"/><rect x="6.3" y="6.2" width="2.4" height="5.8" fill="#222"/></svg>
<div class="a" style="left:725px;top:120px;width:30px;height:1px;background:#222"></div>
<div class="a" style="left:732px;top:125px;width:16px;height:2px;background:#161616"></div>
<svg class="a" style="left:731px;top:131px" width="18" height="18" viewBox="0 0 18 18"><circle cx="5.6" cy="12.6" r="3.6" fill="#c8c8c8"/><circle cx="11.5" cy="9" r="2.6" fill="#cfcfcf"/><circle cx="13.6" cy="3.5" r="2.1" fill="#d8d8d8"/></svg>
<div class="a" style="left:725px;top:153px;width:30px;height:1px;background:#222"></div>
<div class="a" style="left:732px;top:157px;width:16px;height:2px;background:#161616"></div>
<svg class="a" style="left:734px;top:166px" width="13" height="13" viewBox="0 0 13 13"><g fill="#cfcfcf"><circle cx="1.5" cy="1.5" r="1.3"/><circle cx="6.5" cy="1.5" r="1.3"/><circle cx="11.5" cy="1.5" r="1.3"/><circle cx="1.5" cy="6.5" r="1.3"/><circle cx="11.5" cy="6.5" r="1.3"/><circle cx="1.5" cy="11.5" r="1.3"/><circle cx="6.5" cy="11.5" r="1.3"/><circle cx="11.5" cy="11.5" r="1.3"/></g><rect x="2.5" y="2.5" width="8" height="8" fill="none" stroke="#888" stroke-width="0.7"/><rect x="5.5" y="5.5" width="2" height="2" fill="#777"/></svg>
<div class="a" style="left:725px;top:186px;width:30px;height:1px;background:#222"></div>


<!-- ===== properties panel ===== -->
<div class="a" style="left:755px;top:0;width:3px;height:574px;background:#1e1e1e"></div>
<div class="a" style="left:755px;top:0;width:229px;height:3px;background:#373737"></div>
<div class="a" style="left:755px;top:3px;width:229px;height:9px;background:#232323"></div>
<div class="a" style="left:756px;top:12px;width:226px;height:14px;background:#262626"></div>
<div class="a" style="left:756px;top:13px;width:52px;height:13px;background:#3b3b3b"></div>
<div class="t" style="left:762px;top:15.5px;font-weight:bold;color:#dcdcdc;font-size:8.8px">Properties</div>
<div class="t" style="left:814.5px;top:15.5px;color:#a8a8a8;font-size:9.2px">Library</div>
<div class="a" style="left:756px;top:26px;width:226px;height:548px;background:#3b3b3b"></div>

<!-- document section -->
<div class="a" style="left:779px;top:45px;width:14px;height:12px;border:1px solid #bdbdbd;background:#555"></div>
<div class="t" style="left:782px;top:47px;font-size:8px;font-weight:bold;color:#cfcfcf">Fl</div>
<div class="t" style="left:815px;top:36px;color:#d4d4d4;font-size:9.5px">Document</div>
<div class="t" style="left:815px;top:59px;color:#d4d4d4;font-size:9.5px;letter-spacing:0.4px">width-profiles.fla</div>
<div class="sep" style="top:75px;height:2px;background:#2a2a2a"></div>
<div class="hd" style="top:77px"><div class="tri"></div><span>Publish</span></div>
<div class="lbl" style="left:749.5px;top:101px">Profile:</div>
<div class="t" style="left:815px;top:101px;color:#d4d4d4;font-size:9.6px">Default</div>
<div class="a" style="left:815px;top:113px;width:95px;height:14px;background:#3e3e3e;border:1px solid #252525;box-shadow:inset 0 1px 0 #4a4a4a"></div>
<div class="t" style="left:820px;top:116px;color:#d4d4d4;font-size:9.5px">Publish Settings...</div>
<div class="sep" style="top:132px"></div>
<div class="lbl" style="left:749.5px;top:140px">Target:</div>
<div class="dd" style="left:815px;top:137px;width:134px"><span>Flash Player 11.8</span><i></i></div>
<div class="lbl" style="left:749.5px;top:163px">Script:</div>
<div class="dd" style="left:815px;top:160px;width:134px"><span>ActionScript 3.0</span><i></i></div>
<svg class="a" style="left:957px;top:161px" width="12" height="12" viewBox="0 0 12 12"><path d="M3.4 2 A2.2 2.2 0 1 1 1.6 3.8" fill="none" stroke="#d0d0d0" stroke-width="2.2"/><path d="M5 5.5 L10 10.5" stroke="#d0d0d0" stroke-width="2.2" stroke-linecap="round"/></svg>
<div class="sep" style="top:181px"></div>
<div class="lbl" style="left:749.5px;top:191px">Class:</div>
<div class="a" style="left:816px;top:189px;width:133px;height:13px;background:#9c9c9c;border:1px solid #2a2a2a"></div>
<svg class="a" style="left:957px;top:189px" width="12" height="12" viewBox="0 0 12 12"><path d="M2.5 10 L8.5 4" stroke="#b0b0b0" stroke-width="2.6" stroke-linecap="round"/><circle cx="9.3" cy="3.2" r="2.1" fill="#e6e6e6"/></svg>
<div class="sep" style="top:208px"></div>
<div class="hd" style="top:210px"><div class="tri"></div><span>Properties</span></div>
<div class="lbl" style="left:749.5px;top:235px">FPS:</div>
<div class="t org" style="left:818px;top:235px">24.00</div>
<div class="sep" style="top:250px"></div>
<div class="lbl" style="left:749.5px;top:258px">Size:</div>
<div class="t org" style="left:818px;top:257px">550</div>
<div class="t" style="left:856px;top:258px;color:#c8c8c8">x</div>
<div class="t org" style="left:875px;top:257px">400</div>
<div class="t" style="left:918px;top:258px;color:#c8c8c8">px</div>
<svg class="a" style="left:954px;top:255px" width="12" height="12" viewBox="0 0 12 12"><path d="M3.4 2 A2.2 2.2 0 1 1 1.6 3.8" fill="none" stroke="#d0d0d0" stroke-width="2.2"/><path d="M5 5.5 L10 10.5" stroke="#d0d0d0" stroke-width="2.2" stroke-linecap="round"/></svg>
<div class="sep" style="top:272px"></div>
<div class="lbl" style="left:749.5px;top:280px">Stage:</div>
<div class="a" style="left:817px;top:278px;width:23px;height:11px;background:#fff;border:1px solid #888"></div>
<div class="sep" style="top:298px"></div>
<div class="hd" style="top:301px"><div class="tri"></div><span>SWF History</span></div>
<div class="a" style="left:796px;top:320px;width:28px;height:14px;background:#3a3a3a;border:1px solid #343434"></div>
<div class="t" style="left:803px;top:323px;color:#6f6f6f">Log</div>
<div class="a" style="left:888px;top:320px;width:38px;height:14px;background:#3a3a3a;border:1px solid #343434"></div>
<div class="t" style="left:895px;top:323px;color:#6f6f6f">Clear</div>
<div class="sep" style="top:395px"></div>
<div class="hd" style="top:397px"><div class="a" style="left:7px;top:4px;width:0;height:0;border-top:3.5px solid transparent;border-bottom:3.5px solid transparent;border-left:4px solid #d0d0d0"></div><span>Accessibility</span></div>


<!-- ===== tools column ===== -->
<div class="a" style="left:983px;top:0;width:30px;height:3px;background:#373737"></div><div class="a" style="left:983px;top:3px;width:30px;height:9px;background:#232323"></div><div class="a" style="left:982px;top:0;width:3px;height:574px;background:#1e1e1e"></div>
<div class="a" style="left:985px;top:26px;width:28px;height:548px;background:#3a3a3a"></div>

<div class="a" style="left:985px;top:12px;width:28px;height:14px;background:#262626"></div>
<div class="a" style="left:1001px;top:19px;width:0;height:0;border-left:2px solid transparent;border-right:2px solid transparent;border-top:3px solid #aaa"></div>
<div class="a" style="left:1005px;top:17px;width:6px;height:6px;background:#6a6a6a"></div>
<div class="a" style="left:970px;top:19px;width:0;height:0;border-left:2px solid transparent;border-right:2px solid transparent;border-top:3px solid #aaa"></div>
<div class="a" style="left:973px;top:17px;width:6px;height:6px;background:#6a6a6a"></div>
<div class="a" style="left:973px;top:6px;width:0;height:0;border-top:2.5px solid transparent;border-bottom:2.5px solid transparent;border-left:3px solid #aaa"></div>
<div class="a" style="left:977px;top:6px;width:0;height:0;border-top:2.5px solid transparent;border-bottom:2.5px solid transparent;border-left:3px solid #aaa"></div>
<div class="a" style="left:1005px;top:6px;width:0;height:0;border-top:2.5px solid transparent;border-bottom:2.5px solid transparent;border-left:3px solid #aaa"></div>
<div class="a" style="left:1009px;top:6px;width:0;height:0;border-top:2.5px solid transparent;border-bottom:2.5px solid transparent;border-left:3px solid #aaa"></div>
<div class="a" style="left:987px;top:30px;width:23px;height:19px;background:#262626;border:1px solid #1c1c1c"></div>
<svg class="a" style="left:986px;top:26px" width="27" height="548" viewBox="0 0 27 548">
<!-- subselect hollow arrow y40 -->
<path d="M8.5 7.5 L8.5 18.5 L11 16 L13 19.5 L14.3 18.8 L12.5 15.3 L16 15.3Z" fill="none" stroke="#bdbdbd" stroke-width="1.3"/>
<path d="M13.5 18 h2.5 v2.5" stroke="#888" stroke-width="0.8" fill="none"/>
<!-- arrow y62 -->
<path d="M9 30 L9 42 L11.6 39.5 L13.8 43.5 L15.3 42.7 L13.2 38.7 L16.8 38.7Z" fill="#bdbdbd"/>
<!-- free transform y84 -->
<path d="M6 51 L6 63 L9 60.5 L11 64 L12.5 63.2 L10.8 59.8 L14 59.8Z" fill="#bcbcbc"/>
<g fill="#bbb"><rect x="10" y="51" width="2" height="1.5"/><rect x="14" y="51" width="2" height="1.5"/><rect x="18" y="51" width="2" height="1.5"/><rect x="18" y="55" width="2" height="1.5"/><rect x="18" y="59" width="2" height="1.5"/><rect x="14" y="63" width="2" height="1.5"/><rect x="18" y="63" width="2" height="1.5"/></g>
<circle cx="22.5" cy="67" r="1" fill="#aaa"/>
<!-- 3d rotation y106 -->
<path d="M12 73.5 L18 79.5 L12 86 L6 79.5Z" fill="#bcbcbc"/><path d="M6.5 80 Q12 84 17.5 80" stroke="#555" stroke-width="1" fill="none"/><path d="M12 74 V86" stroke="#777" stroke-width="0.8"/>
<circle cx="22.5" cy="88" r="1" fill="#aaa"/>
<!-- lasso y127 -->
<ellipse cx="12" cy="99" rx="6.5" ry="3.5" fill="none" stroke="#bcbcbc" stroke-width="1.4"/><path d="M7 101 Q6 104 9 105" stroke="#bcbcbc" stroke-width="1.2" fill="none"/>
<circle cx="22.5" cy="109" r="1" fill="#aaa"/>
<rect x="0" y="113.5" width="27" height="1" fill="#2a2a2a"/>
<!-- pen y153 -->
<path d="M7 133 L9 125 L15 120 L18.5 123.5 L13.5 129.5 Z" fill="#bcbcbc"/><path d="M15.5 119 L17 117.5 L20.5 121 L19 122.5Z" fill="#bcbcbc"/><circle cx="11" cy="128" r="1" fill="#3a3a3a"/>
<circle cx="22.5" cy="135" r="1" fill="#aaa"/>
<!-- T y175 -->
<path d="M6.5 142 H18.5 V145.5 H17.5 Q17 143.5 15 143.5 H13.6 V153 Q13.6 154 15.5 154.2 V155 H9.5 V154.2 Q11.4 154 11.4 153 V143.5 H10 Q8 143.5 7.5 145.5 H6.5Z" fill="#bcbcbc"/>
<!-- line y198 -->
<path d="M7.5 176.5 L18 167" stroke="#bcbcbc" stroke-width="1.5"/>
<!-- rectangle y219 -->
<rect x="6.5" y="188.5" width="12" height="10.5" fill="#8a8a8a" stroke="#bcbcbc" stroke-width="1.2"/>
<circle cx="22.5" cy="202" r="1" fill="#aaa"/>
<g transform="translate(0,6)"><!-- oval y236 -->
<ellipse cx="12.5" cy="209.6" rx="6.2" ry="4.6" fill="#8a8a8a" stroke="#bcbcbc" stroke-width="1.2"/>
<circle cx="22.5" cy="224" r="1" fill="#aaa"/>
</g><g transform="translate(0,8)"><!-- polystar y256 -->
<path d="M9.5 224.6 H15.5 L18.5 229.6 L15.5 234.6 H9.5 L6.5 229.6Z" fill="#8a8a8a" stroke="#bcbcbc" stroke-width="1.2"/>
</g><g transform="translate(0,12)"><!-- pencil y274 -->
<path d="M7 253 L8 249.5 L15 242.5 L17.5 245 L10.5 252Z" fill="#bcbcbc"/><circle cx="16.8" cy="243.2" r="1.8" fill="#e0e0e0"/>
</g><!-- brush y307 -->
<path d="M6 287 Q7 283 10 283.5 L18 275.5 L19 276.5 L11.5 285 Q11 288 6 287Z" fill="#bcbcbc"/>
<rect x="0" y="294" width="27" height="1" fill="#2a2a2a"/>
<g transform="translate(0,2)"><!-- paint bucket y333 -->
<path d="M8.5 303 L14 300 L18 307.5 L12 311 Z" fill="#bcbcbc"/><path d="M9 302 Q9 297.5 12 298" stroke="#bcbcbc" stroke-width="1.2" fill="none"/><path d="M18 307 Q20 310 19.5 311.5" stroke="#bcbcbc" stroke-width="1.3" fill="none"/>
<!-- ink bottle y354 -->
<path d="M6 326 L10.5 321 L14 326 L10 330Z" fill="#bcbcbc"/><path d="M10 319 L12 321" stroke="#bcbcbc" stroke-width="1.3"/><path d="M13 328 H19 V334 H13Z" fill="none" stroke="#bcbcbc" stroke-width="1.3"/>
</g><!-- eyedropper y377 -->
<path d="M7 356 L8 353 L14 347 L16 349 L10 355Z" fill="#bcbcbc"/><path d="M14.5 345.5 L17 343 Q19 343 19 345 L16.5 347.5Z" fill="#bcbcbc"/>
<!-- eraser y398 -->
<path d="M6 375 L14 367 Q16 366 18 368 Q19.5 370 18 372 L10 379 Q8 380 6.5 378.5 Q5 377 6 375Z" fill="#bcbcbc"/>
<!-- width tool y421 -->
<path d="M7 401 Q9 397 11 399 Q13 402 15 398 Q17 396 19 399" stroke="#bcbcbc" stroke-width="1.5" fill="none"/><circle cx="11" cy="390" r="1.6" fill="#bcbcbc"/><path d="M11 391 L10 397 M10.5 393 L14 394" stroke="#bcbcbc" stroke-width="1.2"/>
<rect x="0" y="409" width="27" height="1" fill="#2a2a2a"/>
<!-- hand y447 -->
<path d="M8 425 V417 Q8 416 9 416 Q10 416 10 417 V422 V414 Q10 413 11 413 Q12 413 12 414 V421 V413 Q12 412 13 412 Q14 412 14 413 V421 V415 Q14 414 15 414 Q16 414 16 415 V423 L17.5 421 Q18.5 420 19.5 421 L16 428 Q15 429.5 13 429.5 H11 Q8 429.5 8 425Z" fill="#bcbcbc"/>
<g transform="translate(0,2)"><!-- zoom y466 -->
<circle cx="11.5" cy="439.5" r="4.2" fill="none" stroke="#bcbcbc" stroke-width="1.5"/><path d="M14.5 442.5 L18.5 446.5" stroke="#bcbcbc" stroke-width="2"/>
</g><rect x="0" y="457" width="27" height="1" fill="#2a2a2a"/>
<g transform="translate(0,6)"><!-- stroke pencil y490 -->
<path d="M7 469.5 L8 466.5 L14 460.5 L16 462.5 L10 468.5Z" fill="#bcbcbc"/><path d="M14.5 459 L16.5 457 Q18.5 457 18.5 459 L16.5 461Z" fill="#bcbcbc"/>
</g><rect x="5.5" y="476.8" width="14.5" height="12" fill="#000" stroke="#262626" stroke-width="1"/>
<g transform="translate(0,2)"><!-- bucket -->
<path d="M8.5 502.5 L13 497 L17 502.5 Q17 505.5 13 505.5 Q8.5 505.5 8.5 502.5Z" fill="#bcbcbc"/><path d="M12 496 L14 494.5" stroke="#bcbcbc" stroke-width="1"/>
</g><rect x="5.5" y="510.7" width="14.5" height="12" fill="#f2983a" stroke="#262626" stroke-width="1"/>
<g transform="translate(0,-2)"><!-- swap / default -->
<path d="M4 537 L8 533 M4 537 L4 533.5 M4 537 L7.5 537" stroke="#bcbcbc" stroke-width="1.1" fill="none"/>
<rect x="14" y="532.5" width="6" height="5" fill="none" stroke="#bcbcbc" stroke-width="1"/><rect x="11" y="535.5" width="6" height="5" fill="#bcbcbc"/>
</g></svg>


<!-- watermark -->
<svg class="a" style="left:836px;top:543px" width="40" height="31" viewBox="0 0 40 31" overflow="visible">
<path d="M19.7 5 A14.8 14.8 0 1 0 34 21.3" fill="none" stroke="#6c6c6c" stroke-width="2.8"/>
<path d="M19.7 4.5 V32" stroke="#6c6c6c" stroke-width="2.6"/>
<path d="M19.7 11 A9 9 0 0 1 19.7 29" fill="none" stroke="#6c6c6c" stroke-width="2.6"/>
<path d="M11.5 17.5 A9 9 0 0 1 19.7 9" fill="none" stroke="#6c6c6c" stroke-width="2.6"/>
<path d="M31 5 L33 9" stroke="#6a4a3a" stroke-width="2"/>
</svg>
<svg class="a" style="left:870px;top:545px" width="150" height="29" viewBox="870 545 150 29"><g font-family="Liberation Sans" font-size="18.5" fill="#626262"><text x="882.5" y="568.5" textLength="53" lengthAdjust="spacingAndGlyphs">train</text><text x="938.8" y="568.5" textLength="70" lengthAdjust="spacingAndGlyphs">simple</text></g></svg>
<div class="a" style="left:1013px;top:0;width:7px;height:574px;background:#080808"></div>
</body></html>
